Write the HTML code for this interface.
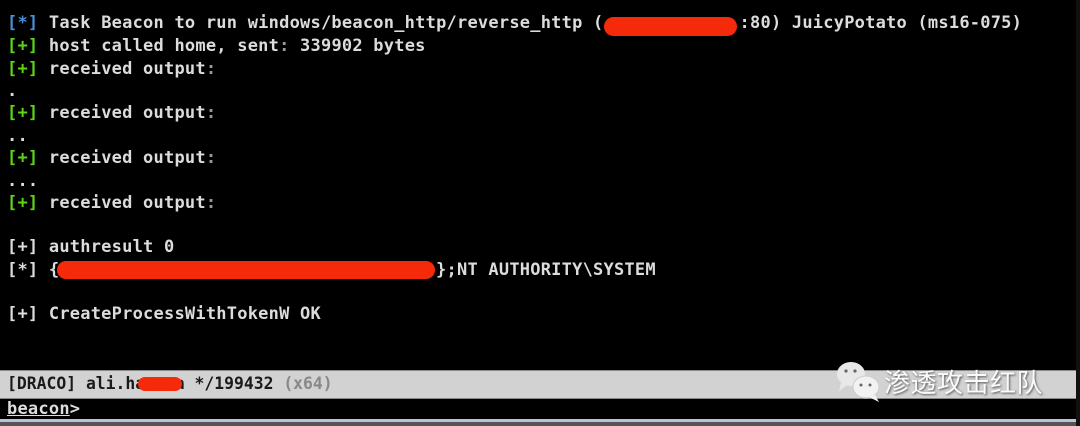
<!DOCTYPE html>
<html><head><meta charset="utf-8"><style>
html,body{margin:0;padding:0;background:#000;width:1080px;height:426px;overflow:hidden;position:relative}
.l{position:absolute;left:7px;font-family:"DejaVu Sans Mono","Liberation Mono",monospace;font-weight:bold;font-size:17px;letter-spacing:0.23px;color:#dcdcdc;white-space:pre;line-height:22px}
.g{color:#5cd41c}.b{color:#4b8fd6}.c{color:#9a9a9a}
.red{position:absolute;background:#f52a0a;border-radius:10px}
</style></head><body>
<div class="l" style="top:12px"><span class="b">[*]</span> Task Beacon to run windows/beacon_http/reverse_http (             :80) JuicyPotato (ms16-075)</div>
<div class="l" style="top:35px"><span class="g">[+]</span> host called home, sent<span class="c">:</span> 339902 bytes</div>
<div class="l" style="top:58px"><span class="g">[+]</span> received output<span class="c">:</span></div>
<div class="l" style="top:80px">.</div>
<div class="l" style="top:102px"><span class="g">[+]</span> received output<span class="c">:</span></div>
<div class="l" style="top:125px">..</div>
<div class="l" style="top:147px"><span class="g">[+]</span> received output<span class="c">:</span></div>
<div class="l" style="top:170px">...</div>
<div class="l" style="top:192px"><span class="g">[+]</span> received output<span class="c">:</span></div>
<div class="l" style="top:236px">[+] authresult 0</div>
<div class="l" style="top:259px">[*] {                                    };NT AUTHORITY\SYSTEM</div>
<div class="l" style="top:303px">[+] CreateProcessWithTokenW OK</div>
<div class="red" style="left:604px;top:17px;width:133px;height:19px"></div>
<div class="red" style="left:57px;top:261px;width:378px;height:18px"></div>
<div style="position:absolute;left:0;top:370px;width:1076px;height:27px;background:#d2d2d2;border-top:1px solid #888;border-bottom:1px solid #888"></div>
<div class="l" style="top:373px;color:#1a1a1a;font-size:16.4px;letter-spacing:0">[DRACO] ali.ha   a */199432 <span style="color:#888">(x64)</span></div>
<div class="red" style="left:138px;top:377px;width:44px;height:14px"></div>
<div class="l" style="top:398px;color:#ddd"><span style="text-decoration:underline">beacon</span>&gt;</div>
<div style="position:absolute;left:0;top:419px;width:1076px;height:3px;background:#b8c4d8"></div>
<div style="position:absolute;left:0;top:422px;width:1080px;height:4px;background:#555"></div>
<div style="position:absolute;left:1076px;top:0;width:4px;height:426px;background:#111"></div>
<svg style="position:absolute;left:833px;top:357px" width="66" height="50" viewBox="0 0 66 50">
<ellipse cx="18" cy="17" rx="14" ry="12" fill="#e8e8e8"/><path d="M8 26 L6 34 L14 28Z" fill="#e8e8e8"/>
<ellipse cx="33" cy="30" rx="13" ry="11" fill="#f2f2f2" stroke="#ccc"/><path d="M42 38 L46 45 L36 40Z" fill="#f2f2f2"/>
<circle cx="13" cy="14" r="1.6" fill="#666"/><circle cx="22" cy="14" r="1.6" fill="#666"/>
<circle cx="28" cy="28" r="1.5" fill="#666"/><circle cx="37" cy="28" r="1.5" fill="#666"/></svg>
<div style="position:absolute;left:884px;top:363px;font-family:'Noto Sans CJK SC',sans-serif;font-size:26px;color:#fafafa;text-shadow:1px 1px 2px #555;letter-spacing:0.5px">渗透攻击红队</div>
</body></html>
